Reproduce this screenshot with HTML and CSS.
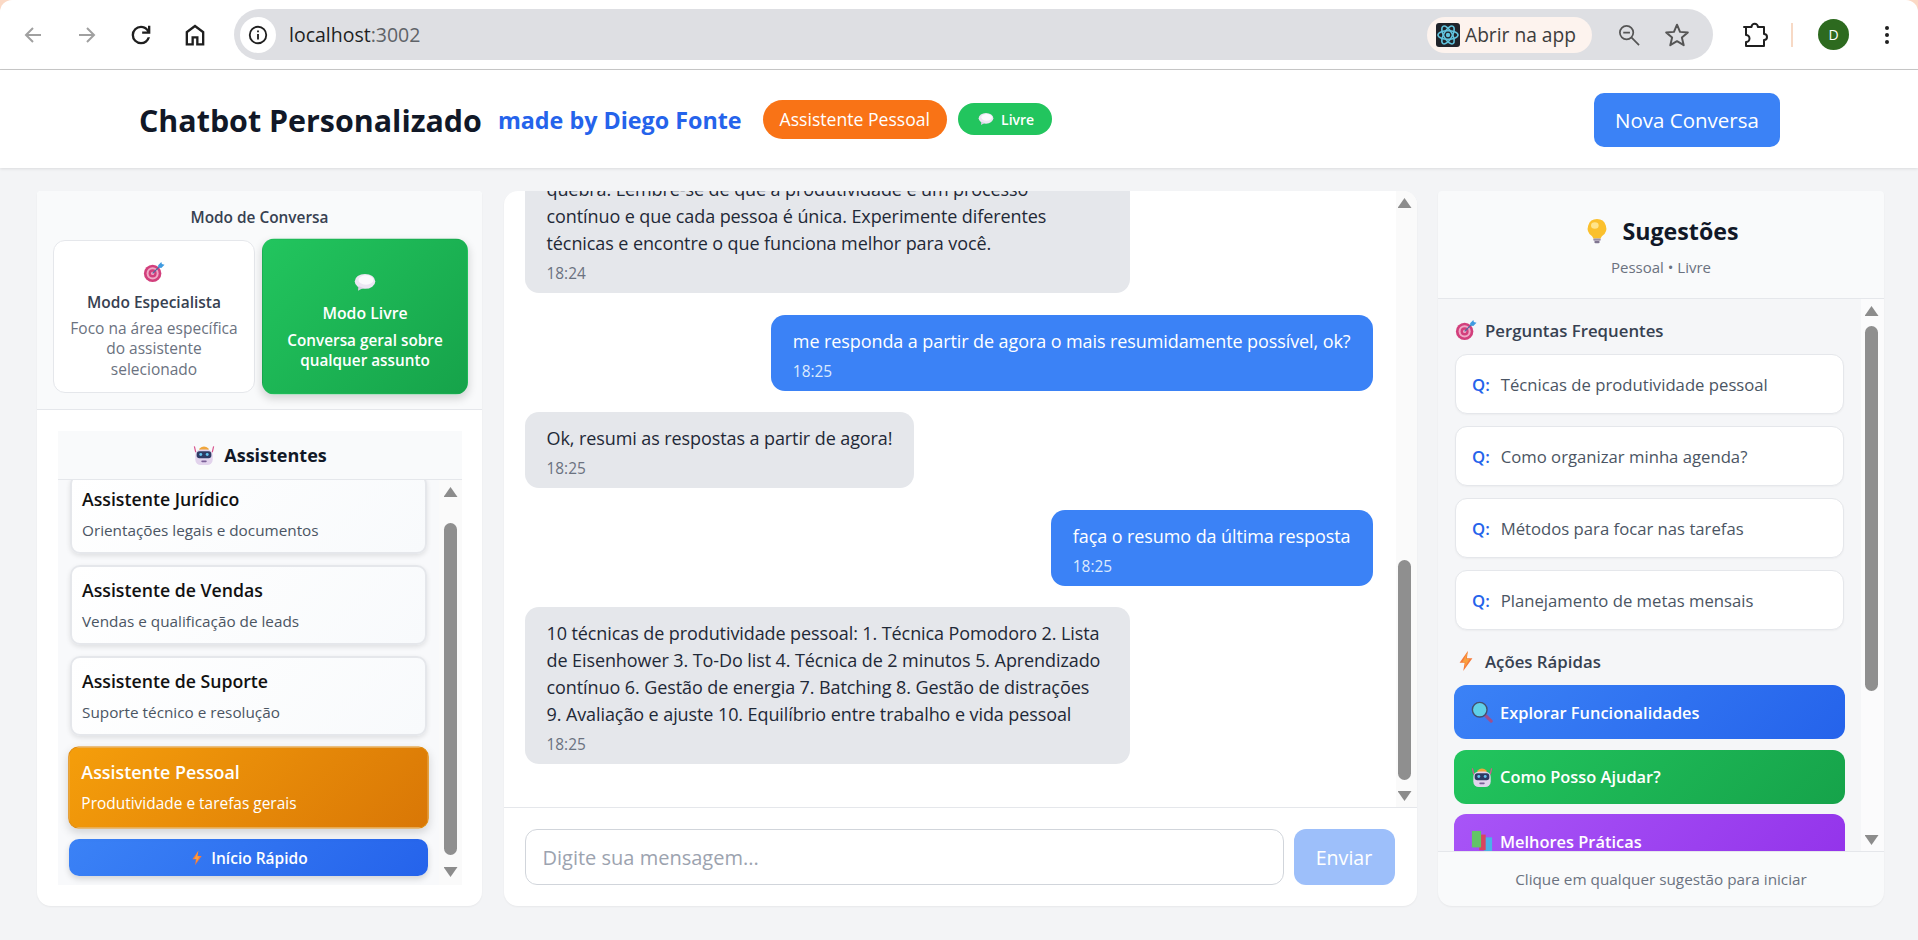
FILE: index.html
```html
<!DOCTYPE html>
<html lang="pt-BR">
<head>
    <meta charset="UTF-8">
    <meta name="viewport" content="width=device-width, initial-scale=1.0">
    <title>Chatbot Personalizado</title>
    <link rel="stylesheet" href="styles.css">
</head>
<body>
    <svg class="sprite" xmlns="http://www.w3.org/2000/svg">
        <symbol id="e-target" viewBox="0 0 24 24">
            <circle cx="10.5" cy="13.5" r="9.5" fill="#d23f7c"/>
            <circle cx="10.5" cy="13.5" r="6.6" fill="#f0a9c6"/>
            <circle cx="10.5" cy="13.5" r="4.4" fill="#d23f7c"/>
            <circle cx="10.5" cy="13.5" r="1.8" fill="#f0a9c6"/>
            <path d="M10.5 13.5 19 5" stroke="#4a6fa5" stroke-width="1.4"/>
            <path d="M16.5 4.5 20 1l.6 2.4L23.500 4l-3.500 3.500-3.200-.4z" fill="#3f9be0"/>
        </symbol>
        <symbol id="e-bubble" viewBox="0 0 24 24">
            <ellipse cx="12" cy="11" rx="11" ry="8" fill="#ece6f3"/>
            <ellipse cx="13" cy="9.500" rx="8" ry="5" fill="#fbfafd"/>
            <path d="M5 16l-.5 5 5.500-3z" fill="#d9cfe6"/>
        </symbol>
        <symbol id="e-robot" viewBox="0 0 24 24">
            <path d="M1.500 2.500 3 9M22.500 2.500 21 9" stroke="#d8568f" stroke-width="1.300"/>
            <path d="M7 5q5-4.500 10 0v2H7z" fill="#f0a63c"/>
            <rect x="2.500" y="6" width="19" height="17" rx="6" fill="#e2d3ec"/>
            <rect x="4" y="8" width="16" height="7.500" rx="3" fill="#2d3a63"/>
            <circle cx="8.500" cy="11.500" r="1.600" fill="#64c3ee"/>
            <circle cx="15.500" cy="11.500" r="1.600" fill="#64c3ee"/>
            <rect x="9" y="18" width="6" height="1.800" rx=".9" fill="#7a5f97"/>
        </symbol>
        <symbol id="e-bolt" viewBox="0 0 24 24">
            <path d="M14 1 5 14h5.500L9 23l10-14h-6z" fill="#f5793b"/>
            <path d="M14 1 8 13.500h3.500L10.500 19 16 9.500h-4z" fill="#f9a03f"/>
        </symbol>
        <symbol id="e-bulb" viewBox="0 0 24 24">
            <path d="M12 1a8.500 8.500 0 0 0-5 15.400c.9.800 1.300 1.700 1.300 2.600h7.400c0-.9.400-1.800 1.300-2.600A8.500 8.500 0 0 0 12 1z" fill="#fbc02d"/>
            <ellipse cx="10" cy="7" rx="3.500" ry="3" fill="#ffe48a"/>
            <rect x="8.500" y="19" width="7" height="2" rx="1" fill="#9a8fa8"/>
            <rect x="9.500" y="21.200" width="5" height="2" rx="1" fill="#7f7590"/>
        </symbol>
        <symbol id="e-glass" viewBox="0 0 24 24">
            <path d="M14 14l8 8" stroke="#a04f8c" stroke-width="3.400" stroke-linecap="round"/>
            <circle cx="9.500" cy="9.500" r="8" fill="#5fd0e8" stroke="#44506f" stroke-width="1.500"/>
        </symbol>
        <symbol id="e-books" viewBox="0 0 24 24">
            <rect x="14" y="8" width="9" height="15" fill="#4ab2e8"/>
            <rect x="9" y="5" width="7" height="17" fill="#d8455f"/>
            <rect x="1" y="1" width="10" height="18" fill="#63c467"/>
        </symbol>
    </svg>

    <div class="chrome-frame">
        <div class="chrome">
            <svg class="tool-icon" viewBox="0 0 24 24"><path d="M20 12H5M12 5l-7 7 7 7" fill="none" stroke="#a0a0a0" stroke-width="2"/></svg>
            <svg class="tool-icon" viewBox="0 0 24 24"><path d="M4 12h15M12 5l7 7-7 7" fill="none" stroke="#a0a0a0" stroke-width="2"/></svg>
            <svg class="tool-icon tool-icon-lg" viewBox="0 0 24 24"><path fill="#1f1f1f" d="M12 20q-3.350 0-5.675-2.325T4 12q0-3.350 2.325-5.675T12 4q1.725 0 3.300.712T18 6.750V4h2v7h-7V9h4.200q-.8-1.400-2.188-2.200T12 6Q9.500 6 7.750 7.750T6 12q0 2.500 1.750 4.250T12 18q1.925 0 3.475-1.100T17.650 14h2.100q-.7 2.650-2.850 4.325T12 20z"/></svg>
            <svg class="tool-icon tool-icon-lg" viewBox="0 0 24 24"><path fill="#1f1f1f" d="M6 19h3v-6h6v6h3v-9l-6-4.500L6 10v9zm-2 2V9l8-6 8 6v12h-7v-6h-2v6H4z"/></svg>
            <div class="omnibox">
                <div class="site-info">
                    <svg class="info-icon" viewBox="0 0 24 24"><circle cx="12" cy="12" r="9" fill="none" stroke="#1f1f1f" stroke-width="2"/><path d="M12 11v6M12 7v2" stroke="#1f1f1f" stroke-width="2"/></svg>
                </div>
                <span class="url">localhost<span class="url-port">:3002</span></span>
                <div class="app-chip">
                    <svg class="app-icon" viewBox="0 0 24 24">
                        <rect width="24" height="24" rx="3" fill="#20232a"/>
                        <g fill="none" stroke="#61c4de" stroke-width="1.600">
                            <ellipse cx="12" cy="12" rx="10" ry="4.200"/>
                            <ellipse cx="12" cy="12" rx="10" ry="4.200" transform="rotate(60 12 12)"/>
                            <ellipse cx="12" cy="12" rx="10" ry="4.200" transform="rotate(120 12 12)"/>
                        </g>
                        <circle cx="12" cy="12" r="2.200" fill="#61c4de"/>
                    </svg>
                    <span>Abrir na app</span>
                </div>
                <svg class="zoom-icon" viewBox="0 0 24 24"><circle cx="10" cy="10" r="7" fill="none" stroke="#555" stroke-width="1.800"/><path d="M6.500 10h7M15 15l8 8" stroke="#555" stroke-width="1.800"/></svg>
                <svg class="star-icon" viewBox="0 0 24 24"><path d="M12 2.500l2.800 6.600 7.200.6-5.500 4.700 1.700 7-6.200-3.700-6.200 3.700 1.700-7L2 9.700l7.200-.6z" fill="none" stroke="#555" stroke-width="1.800" stroke-linejoin="round"/></svg>
            </div>
            <svg class="ext-icon" viewBox="0 0 28 28"><path d="M3 6h7.500a3.200 3.200 0 1 1 6.400 0H23v7a3 3 0 1 1 0 6v6H5v-4a3.500 3.500 0 0 0 0-7V6z" fill="none" stroke="#1f1f1f" stroke-width="2" stroke-linejoin="round"/></svg>
            <div class="chrome-sep"></div>
            <div class="avatar">D</div>
            <svg class="menu-icon" viewBox="0 0 6 24"><circle cx="3" cy="5" r="2" fill="#1f1f1f"/><circle cx="3" cy="12" r="2" fill="#1f1f1f"/><circle cx="3" cy="19" r="2" fill="#1f1f1f"/></svg>
        </div>
    </div>

    <header class="app-header">
        <h1 class="app-title">Chatbot Personalizado</h1>
        <span class="made-by">made by Diego Fonte</span>
        <span class="badge-orange">Assistente Pessoal</span>
        <span class="badge-green"><svg class="emoji-sm"><use href="#e-bubble"/></svg>Livre</span>
        <button class="new-chat">Nova Conversa</button>
    </header>

    <main class="layout">
        <aside class="panel panel-left">
            <section class="mode-box">
                <h3 class="mode-title">Modo de Conversa</h3>
                <div class="mode-grid">
                    <div class="mode-card">
                        <svg class="emoji-md"><use href="#e-target"/></svg>
                        <div class="mode-name">Modo Especialista</div>
                        <div class="mode-desc">Foco na área específica do assistente selecionado</div>
                    </div>
                    <div class="mode-card mode-active">
                        <svg class="emoji-md"><use href="#e-bubble"/></svg>
                        <div class="mode-name">Modo Livre</div>
                        <div class="mode-desc">Conversa geral sobre qualquer assunto</div>
                    </div>
                </div>
            </section>
            <section class="assist-box">
                <div class="assist-head"><svg class="emoji-md"><use href="#e-robot"/></svg>Assistentes</div>
                <div class="assist-body">
                    <div class="assist-list">
                        <div class="assist-card">
                            <div class="assist-name">Assistente Jurídico</div>
                            <div class="assist-desc">Orientações legais e documentos</div>
                        </div>
                        <div class="assist-card">
                            <div class="assist-name">Assistente de Vendas</div>
                            <div class="assist-desc">Vendas e qualificação de leads</div>
                        </div>
                        <div class="assist-card">
                            <div class="assist-name">Assistente de Suporte</div>
                            <div class="assist-desc">Suporte técnico e resolução</div>
                        </div>
                        <div class="assist-card assist-active">
                            <div class="assist-name">Assistente Pessoal</div>
                            <div class="assist-desc">Produtividade e tarefas gerais</div>
                        </div>
                        <button class="quick-start"><svg class="emoji-sm"><use href="#e-bolt"/></svg>Início Rápido</button>
                    </div>
                    <div class="scrollbar scroll-assist">
                        <div class="arrow-up"></div>
                        <div class="thumb"></div>
                        <div class="arrow-down"></div>
                    </div>
                </div>
            </section>
        </aside>

        <section class="panel panel-chat">
            <div class="chat-body">
                <div class="messages">
                    <div class="msg msg-bot">
                        <p>quebra. Lembre-se de que a produtividade é um processo<br>contínuo e que cada pessoa é única. Experimente diferentes<br>técnicas e encontre o que funciona melhor para você.</p>
                        <time>18:24</time>
                    </div>
                    <div class="msg msg-user">
                        <p>me responda a partir de agora o mais resumidamente possível, ok?</p>
                        <time>18:25</time>
                    </div>
                    <div class="msg msg-bot">
                        <p>Ok, resumi as respostas a partir de agora!</p>
                        <time>18:25</time>
                    </div>
                    <div class="msg msg-user">
                        <p>faça o resumo da última resposta</p>
                        <time>18:25</time>
                    </div>
                    <div class="msg msg-bot">
                        <p>10 técnicas de produtividade pessoal: 1. Técnica Pomodoro 2. Lista de Eisenhower 3. To-Do list 4. Técnica de 2 minutos 5. Aprendizado contínuo 6. Gestão de energia 7. Batching 8. Gestão de distrações 9. Avaliação e ajuste 10. Equilíbrio entre trabalho e vida pessoal</p>
                        <time>18:25</time>
                    </div>
                </div>
                <div class="scrollbar scroll-chat">
                    <div class="arrow-up"></div>
                    <div class="thumb"></div>
                    <div class="arrow-down"></div>
                </div>
            </div>
            <form class="composer">
                <input class="composer-input" type="text" placeholder="Digite sua mensagem...">
                <button type="button" class="send-btn">Enviar</button>
            </form>
        </section>

        <aside class="panel panel-right">
            <div class="tips-head">
                <h2 class="tips-title"><svg class="emoji-lg"><use href="#e-bulb"/></svg>Sugestões</h2>
                <p class="tips-sub">Pessoal • Livre</p>
            </div>
            <div class="tips-body">
                <div class="tips-list">
                    <h4 class="tips-group"><svg class="emoji-md"><use href="#e-target"/></svg>Perguntas Frequentes</h4>
                    <div class="faq"><b>Q:</b>Técnicas de produtividade pessoal</div>
                    <div class="faq"><b>Q:</b>Como organizar minha agenda?</div>
                    <div class="faq"><b>Q:</b>Métodos para focar nas tarefas</div>
                    <div class="faq"><b>Q:</b>Planejamento de metas mensais</div>
                    <h4 class="tips-group group-actions"><svg class="emoji-md"><use href="#e-bolt"/></svg>Ações Rápidas</h4>
                    <button class="action action-blue"><svg class="emoji-md"><use href="#e-glass"/></svg>Explorar Funcionalidades</button>
                    <button class="action action-green"><svg class="emoji-md"><use href="#e-robot"/></svg>Como Posso Ajudar?</button>
                    <button class="action action-purple"><svg class="emoji-md"><use href="#e-books"/></svg>Melhores Práticas</button>
                </div>
                <div class="scrollbar scroll-tips">
                    <div class="arrow-up"></div>
                    <div class="thumb"></div>
                    <div class="arrow-down"></div>
                </div>
            </div>
            <div class="tips-foot">Clique em qualquer sugestão para iniciar</div>
        </aside>
    </main>
</body>
</html>
```

FILE: styles.css
```css
* {
    box-sizing: border-box;
}
body {
    margin: 0;
    height: 940px;
    overflow: hidden;
    background-color: #f3f4f6;
    font-family: "Open Sans", "Noto Sans", sans-serif;
    color: #1f2937;
}
h1, h2, h3, h4, p {
    margin: 0;
}
button {
    font-family: inherit;
    border: none;
}
.sprite {
    display: none;
}

/* barra do navegador */
.chrome-frame {
    background-color: #fbd9c5;
}
.chrome {
    height: 70px;
    padding: 0 0 0 21px;
    display: flex;
    align-items: center;
    background-color: #fff;
    border-radius: 12px 12px 0 0;
    border-bottom: 1px solid #c9c9c9;
}
.tool-icon {
    width: 24px;
    height: 24px;
    margin-right: 30px;
    flex-shrink: 0;
}
.tool-icon-lg {
    width: 28px;
    height: 28px;
    margin-left: -2px;
    margin-right: 28px;
}
.omnibox {
    width: 1479px;
    height: 51px;
    margin-left: -3px;
    padding: 0 23px 0 6px;
    display: flex;
    align-items: center;
    background-color: #dedfe3;
    border-radius: 26px;
}
.site-info {
    width: 36px;
    height: 36px;
    display: flex;
    align-items: center;
    justify-content: center;
    background-color: #fff;
    border-radius: 50%;
}
.info-icon {
    width: 22px;
    height: 22px;
}
.url {
    margin-left: 13px;
    font-size: 19.500px;
    color: #1f1f1f;
}
.url-port {
    color: #5f6368;
}
.app-chip {
    margin-left: auto;
    width: 165px;
    height: 36px;
    padding-left: 9px;
    display: flex;
    align-items: center;
    gap: 5px;
    background-color: #fdf3ee;
    border-radius: 18px;
    font-size: 19.200px;
    color: #3c3c3c;
}
.app-icon {
    width: 24px;
    height: 24px;
}
.zoom-icon {
    width: 23px;
    height: 23px;
    margin-left: 25px;
}
.star-icon {
    width: 26px;
    height: 26px;
    margin-left: 24px;
}
.ext-icon {
    width: 28px;
    height: 28px;
    margin-left: 28px;
}
.chrome-sep {
    width: 2px;
    height: 24px;
    margin-left: 22px;
    background-color: #f7d9c5;
}
.avatar {
    width: 31px;
    height: 31px;
    margin-left: 25px;
    display: flex;
    align-items: center;
    justify-content: center;
    background-color: #2d6a1f;
    color: #fff;
    border-radius: 50%;
    font-size: 14px;
}
.menu-icon {
    width: 6px;
    height: 24px;
    margin-left: 35px;
}

/* cabecalho */
.app-header {
    height: 98px;
    padding: 0 138px 0 139px;
    display: flex;
    align-items: center;
    background-color: #fff;
    box-shadow: 0 1px 3px rgba(0, 0, 0, 0.1);
}
.app-title {
    margin-top: 3px;
    font-size: 30.400px;
    font-weight: 700;
    color: #111827;
}
.made-by {
    margin-top: 2px;
    margin-left: 16px;
    font-size: 23.300px;
    font-weight: 700;
    color: #2563eb;
}
.badge-orange {
    margin-left: 21px;
    height: 39px;
    padding: 0 17px;
    display: flex;
    align-items: center;
    background-color: #f97316;
    color: #fff;
    border-radius: 20px;
    font-size: 17.600px;
}
.badge-green {
    margin-left: 11px;
    height: 32px;
    padding: 0 18px 0 20px;
    display: flex;
    align-items: center;
    gap: 7px;
    background-color: #22c55e;
    color: #fff;
    border-radius: 16px;
    font-size: 14px;
    font-weight: 600;
}
.new-chat {
    margin-left: auto;
    margin-top: 1px;
    width: 186px;
    height: 54px;
    background-color: #3b82f6;
    color: #fff;
    border-radius: 10px;
    font-size: 20.500px;
}
.emoji-sm {
    width: 16px;
    height: 16px;
    flex-shrink: 0;
}
.emoji-md {
    width: 22px;
    height: 22px;
    flex-shrink: 0;
}
.emoji-lg {
    width: 26px;
    height: 26px;
    flex-shrink: 0;
}

/* layout principal */
.layout {
    height: 739px;
    padding: 23px 34px 0 37px;
    display: grid;
    grid-template-columns: 445px 913px 446px;
    grid-template-rows: 715px;
    column-gap: 21.5px;
}
.panel {
    background-color: #fff;
    overflow: hidden;
    display: flex;
    flex-direction: column;
    border-radius: 14px;
    box-shadow: 0 1px 2px rgba(0, 0, 0, 0.05);
}

/* coluna esquerda */
.panel-left {
    border-radius: 4px 4px 14px 14px;
}
.mode-box {
    height: 219px;
    padding: 17px 16px 0;
    background-color: #f9fafb;
    border-bottom: 1px solid #e5e7eb;
}
.mode-title {
    font-size: 15.400px;
    line-height: 20px;
    font-weight: 600;
    text-align: center;
    color: #374151;
}
.mode-grid {
    margin-top: 11.500px;
    display: grid;
    grid-template-columns: 202px 202px;
    gap: 9px;
}
.mode-card {
    height: 153px;
    padding: 8px 8px 0;
    display: flex;
    flex-direction: column;
    align-items: center;
    justify-content: center;
    text-align: center;
    background-color: #fff;
    border: 1px solid #e5e7eb;
    border-radius: 12px;
}
.mode-active {
    transform: scale(1.02);
    background: linear-gradient(135deg, #22c55e, #16a34a);
    border-color: transparent;
    box-shadow: 0 4px 8px rgba(0, 0, 0, 0.15);
    color: #fff;
}
.mode-name {
    margin-top: 9px;
    font-size: 15.500px;
    font-weight: 600;
    line-height: 20px;
    color: #374151;
}
.mode-desc {
    margin-top: 6px;
    font-size: 15.500px;
    line-height: 20.500px;
    color: #6b7280;
}
.mode-active .mode-desc {
    font-size: 15px;
}
.mode-active .mode-name,
.mode-active .mode-desc {
    color: #fff;
    font-weight: 600;
}
.assist-box {
    flex: 1;
    min-height: 0;
    padding: 21px 20px 21px 21px;
    display: flex;
    flex-direction: column;
}
.assist-head {
    height: 49px;
    flex-shrink: 0;
    display: flex;
    align-items: center;
    justify-content: center;
    gap: 9px;
    background-color: #f9fafb;
    border-bottom: 1px solid #e5e7eb;
    font-size: 18px;
    font-weight: 700;
    color: #111827;
}
.assist-body {
    flex: 1;
    min-height: 0;
    display: flex;
}
.assist-list {
    flex: 1;
    min-width: 0;
    padding: 0 12px 9px;
    overflow: hidden;
    display: flex;
    flex-direction: column;
    justify-content: flex-end;
    gap: 11px;
    background-color: #f8f9fb;
}
.assist-card {
    height: 80px;
    flex-shrink: 0;
    padding: 0 10px 2px;
    display: flex;
    flex-direction: column;
    justify-content: center;
    background: linear-gradient(135deg, #fff, #f8fafc);
    border: 2px solid #e5e7eb;
    border-radius: 10px;
    box-shadow: 0 2px 5px rgba(0, 0, 0, 0.1);
}
.assist-name {
    font-size: 17.700px;
    font-weight: 600;
    line-height: 24px;
    color: #111;
}
.assist-desc {
    margin-top: 9px;
    font-size: 15.300px;
    line-height: 20px;
    color: #4b5563;
}
.assist-active {
    height: 81px;
    transform: scale(1.01);
    background: linear-gradient(135deg, #f59e0b, #d97706);
    border: 1px solid #e08a0b;
    box-shadow: 0 4px 10px rgba(0, 0, 0, 0.15);
    padding: 0 12px 2px;
}
.assist-active .assist-name,
.assist-active .assist-desc {
    color: #fff;
}
.quick-start {
    height: 37px;
    margin: 0 -1px;
    flex-shrink: 0;
    display: flex;
    align-items: center;
    justify-content: center;
    gap: 6px;
    background: linear-gradient(135deg, #3b82f6, #2563eb);
    color: #fff;
    border-radius: 10px;
    box-shadow: 0 3px 6px rgba(0, 0, 0, 0.15);
    font-size: 15.500px;
    font-weight: 600;
}

/* barras de rolagem desenhadas */
.scrollbar {
    flex-shrink: 0;
    width: 23px;
    display: flex;
    flex-direction: column;
    align-items: center;
    background-color: #fafafa;
}
.arrow-up,
.arrow-down {
    width: 14px;
    height: 10px;
    flex-shrink: 0;
    background-color: #8c8c8c;
}
.arrow-up {
    clip-path: polygon(50% 0, 100% 100%, 0 100%);
}
.arrow-down {
    clip-path: polygon(0 0, 100% 0, 50% 100%);
}
.thumb {
    width: 13px;
    flex-shrink: 0;
    background-color: #8f8f8f;
    border-radius: 7px;
}
.scroll-assist .arrow-up {
    margin-top: 7px;
}
.scroll-assist .thumb {
    margin-top: 26px;
    height: 332px;
}
.scroll-assist .arrow-down {
    margin-top: 12px;
}
.scroll-chat {
    width: 21px;
    padding-right: 3px;
}
.scroll-chat .arrow-up {
    margin-top: 7px;
}
.scroll-chat .thumb {
    margin-top: 352px;
    height: 220px;
}
.scroll-chat .arrow-down {
    margin-top: 11px;
}
.scroll-tips {
    background-color: #fbfbfc;
    padding-right: 2px;
}
.scroll-tips .arrow-up {
    margin-top: 7px;
}
.scroll-tips .thumb {
    margin-top: 10px;
    height: 365px;
}
.scroll-tips .arrow-down {
    margin-top: 144px;
}

/* conversa */
.chat-body {
    flex: 1;
    min-height: 0;
    display: flex;
    border-bottom: 1px solid #e5e7eb;
}
.messages {
    flex: 1;
    min-width: 0;
    padding: 0 23px 43px 21px;
    overflow: hidden;
    display: flex;
    flex-direction: column;
    justify-content: flex-end;
    gap: 21.500px;
}
.msg {
    flex-shrink: 0;
    padding: 13px 22px 9px;
    border-radius: 14px;
    font-size: 18px;
    letter-spacing: -0.09px;
    line-height: 27px;
}
.msg time {
    display: block;
    margin-top: 7px;
    font-size: 15.400px;
    letter-spacing: 0;
    line-height: 20px;
}
.msg-bot {
    align-self: flex-start;
    width: 605px;
    background-color: #e5e7eb;
    color: #1f2937;
}
.msg-bot:nth-child(3) {
    width: auto;
}
.msg-user {
    align-self: flex-end;
    background-color: #3b82f6;
    color: #fff;
}
.msg-user time {
    color: #dbeafe;
}
.msg-bot time {
    color: #6b7280;
}
.composer {
    height: 98px;
    flex-shrink: 0;
    margin: 0;
    padding: 21px 22px 21px 21px;
    display: flex;
    gap: 10px;
}
.composer-input {
    flex: 1;
    min-width: 0;
    height: 56px;
    padding: 0 17px;
    border: 1px solid #d1d5db;
    border-radius: 12px;
    font-family: inherit;
    font-size: 20px;
}
.composer-input::placeholder {
    color: #9ca3af;
}
.send-btn {
    width: 101px;
    height: 56px;
    background-color: #9dbffa;
    color: #fff;
    border-radius: 12px;
    font-size: 19.600px;
}

/* coluna direita */
.panel-right {
    background-color: #f9fafb;
    border-radius: 4px 4px 14px 14px;
}
.tips-head {
    height: 108px;
    flex-shrink: 0;
    padding-top: 24px;
    text-align: center;
    border-bottom: 1px solid #e5e7eb;
}
.tips-title {
    display: flex;
    align-items: center;
    justify-content: center;
    gap: 13px;
    font-size: 23.200px;
    line-height: 32px;
    font-weight: 700;
    color: #111827;
}
.tips-sub {
    margin-top: 10px;
    font-size: 15px;
    line-height: 20px;
    color: #6b7280;
}
.tips-body {
    flex: 1;
    min-height: 0;
    display: flex;
}
.tips-list {
    flex: 1;
    min-width: 0;
    padding: 19px 17px 0;
    overflow: hidden;
    display: flex;
    flex-direction: column;
    background-color: #f5f6f8;
}
.tips-group {
    height: 24px;
    margin-bottom: 12px;
    flex-shrink: 0;
    display: flex;
    align-items: center;
    gap: 8px;
    font-size: 16.800px;
    font-weight: 600;
    color: #374151;
}
.group-actions {
    margin-top: 7px;
}
.faq {
    height: 60px;
    margin-bottom: 12px;
    flex-shrink: 0;
    padding: 0 16px;
    display: flex;
    align-items: center;
    gap: 11px;
    background-color: #fff;
    border: 1px solid #e5e7eb;
    border-radius: 12px;
    box-shadow: 0 1px 2px rgba(0, 0, 0, 0.04);
    font-size: 16.700px;
    color: #4b5563;
}
.faq b {
    font-weight: 600;
    color: #2563eb;
}
.action {
    height: 54px;
    margin: 0 -1px 10.500px;
    flex-shrink: 0;
    padding: 0 17px;
    display: flex;
    align-items: center;
    gap: 7px;
    color: #fff;
    border-radius: 12px;
    font-size: 16.400px;
    font-weight: 600;
}
.action-blue {
    background: linear-gradient(135deg, #3b82f6, #2563eb);
}
.action-green {
    background: linear-gradient(135deg, #22c55e, #16a34a);
}
.action-purple {
    background: linear-gradient(135deg, #a855f7, #9333ea);
}
.tips-foot {
    height: 55px;
    flex-shrink: 0;
    display: flex;
    align-items: center;
    justify-content: center;
    border-top: 1px solid #e5e7eb;
    font-size: 15.300px;
    color: #6b7280;
}
```
